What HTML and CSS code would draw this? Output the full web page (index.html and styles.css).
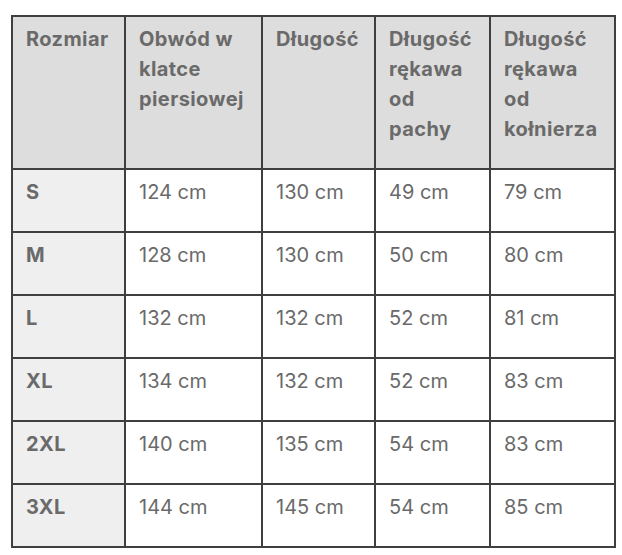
FILE: index.html
```html
<!DOCTYPE html>
<html lang="pl">
<head>
<meta charset="utf-8">
<title>Tabela rozmiarów</title>
<link rel="stylesheet" href="styles.css">
</head>
<body>
<div class="page">
<table class="sizes">
  <colgroup>
    <col class="c1"><col class="c2"><col class="c3"><col class="c4"><col class="c5">
  </colgroup>
  <thead>
    <tr>
      <th>Rozmiar</th>
      <th>Obwód w klatce piersiowej</th>
      <th>Długość</th>
      <th>Długość rękawa od pachy</th>
      <th>Długość rękawa od kołnierza</th>
    </tr>
  </thead>
  <tbody>
    <tr><th>S</th><td>124 cm</td><td>130 cm</td><td>49 cm</td><td>79 cm</td></tr>
    <tr><th>M</th><td>128 cm</td><td>130 cm</td><td>50 cm</td><td>80 cm</td></tr>
    <tr><th>L</th><td>132 cm</td><td>132 cm</td><td>52 cm</td><td>81 cm</td></tr>
    <tr><th>XL</th><td>134 cm</td><td>132 cm</td><td>52 cm</td><td>83 cm</td></tr>
    <tr><th>2XL</th><td>140 cm</td><td>135 cm</td><td>54 cm</td><td>83 cm</td></tr>
    <tr><th>3XL</th><td>144 cm</td><td>145 cm</td><td>54 cm</td><td>85 cm</td></tr>
  </tbody>
</table>
</div>
</body>
</html>
```
FILE: styles.css
```css
html, body {
  margin: 0;
  padding: 0;
  background: #ffffff;
}
.page {
  padding: 15px 0 0 11px;
}
.sizes {
  border-collapse: collapse;
  table-layout: fixed;
  width: 603px;
  font-family: "Inter", "Liberation Sans", sans-serif;
  font-size: 20px;
  line-height: 30px;
  color: #6a6a6a;
}
.c1 { width: 113px; }
.c2 { width: 137px; }
.c3 { width: 113px; }
.c4 { width: 115px; }
.c5 { width: 125px; }
.sizes th,
.sizes td {
  border: 2px solid #3f3f3f;
  padding: 7px 13px;
  text-align: left;
  vertical-align: top;
}
.sizes th {
  font-weight: 700;
  letter-spacing: 0.4px;
}
.sizes td {
  font-weight: 400;
}
.sizes thead th {
  background: #dddddd;
  height: 137px;
}
.sizes tbody th {
  background: #efefef;
}
.sizes tbody tr {
  height: 63px;
}
```
